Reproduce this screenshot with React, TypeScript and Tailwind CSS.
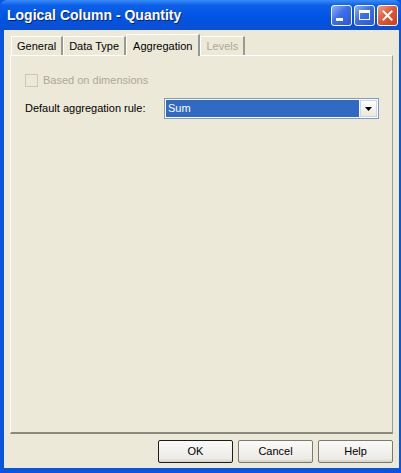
import { ReactNode } from 'react'

const font = { fontFamily: '"Liberation Sans", Arial, sans-serif' }

function TitleButton({ children, close }: { children: ReactNode; close?: boolean }) {
  return (
    <div
      className={`w-[21px] h-[21px] rounded-[3px] border border-white flex items-center justify-center ${
        close
          ? 'bg-[linear-gradient(135deg,#f0a088,#e05a36_45%,#c8401e)]'
          : 'bg-[linear-gradient(135deg,#8fb0f5,#3d6ee8_45%,#2a58d8)]'
      }`}
    >
      {children}
    </div>
  )
}

function Tab({ label, active, disabled }: { label: string; active?: boolean; disabled?: boolean }) {
  return (
    <div
      className={`relative flex items-center border-t border-l border-white ${
        active
          ? 'h-[22px] -mb-px bg-[#ece9d8] z-10 border-r-2 border-r-[#919b9c] px-[6px] pt-[2px]'
          : 'h-[19px] bg-[#ece9d8] border-r-2 border-r-[#9a9a90] px-[5px]'
      } ${disabled ? 'text-[#aca899]' : 'text-black'}`}
    >
      {label}
    </div>
  )
}

function Button({ label, def }: { label: string; def?: boolean }) {
  return (
    <div
      className={`w-[75px] h-[23px] flex items-center justify-center rounded-[2px] bg-[linear-gradient(#fafaf8,#ecebe6_85%,#d6d0c5)] ${
        def ? 'border border-[#1d1d1d]' : 'border border-[#7a7a6f]'
      }`}
    >
      {label}
    </div>
  )
}

export default function App() {
  return (
    <div className="w-[401px] h-[473px] bg-[#0a55e0] flex flex-col text-[11px]" style={font}>
      {/* title bar */}
      <div className="h-[30px] shrink-0 rounded-t-[7px] bg-[linear-gradient(#3a8cf8,#0b5fe8_18%,#0054e3_60%,#0a4fd4)] flex items-center pl-[7px] pr-[3px]">
        <div className="flex-1 text-white font-bold text-[14px] [text-shadow:1px_1px_#0a1f70]">
          Logical Column - Quantity
        </div>
        <div className="flex gap-[2px]">
          <TitleButton>
            <div className="w-[7px] h-[3px] bg-white mt-[9px] -ml-[4px]" />
          </TitleButton>
          <TitleButton>
            <div className="w-[11px] h-[10px] border border-white border-t-[3px]" />
          </TitleButton>
          <TitleButton close>
            <svg width="11" height="11" viewBox="0 0 11 11">
              <path d="M1.5 1.5 L9.5 9.5 M9.5 1.5 L1.5 9.5" stroke="white" strokeWidth="2" strokeLinecap="square" />
            </svg>
          </TitleButton>
        </div>
      </div>

      {/* body */}
      <div className="flex-1 ml-[4px] mr-[2px] mb-[5px] bg-[#ece9d8] flex flex-col">
        <div className="pl-[6px] pr-[6px] pt-[3px] flex flex-col">
          <div className="flex items-end h-[22px] pl-[1px]">
            <Tab label="General" />
            <Tab label="Data Type" />
            <Tab label="Aggregation" active />
            <Tab label="Levels" disabled />
          </div>
          <div className="h-[379px] bg-[#ece9d8] border-t border-l border-white border-r border-r-[#919b9c] border-b-2 border-b-[#8c8a7c] flex flex-col pl-[14px] pr-[13px] pt-[16px]">
            <div className="flex items-center gap-[5px] h-[16px]">
              <div className="w-[13px] h-[13px] border border-[#cac8bb] bg-[#ece9d8]" />
              <span className="text-[#aca899]">Based on dimensions</span>
            </div>
            <div className="flex items-center mt-[10px]">
              <span className="w-[139px]">Default aggregation rule:</span>
              <div className="flex-1 h-[21px] border border-[#7f9db9] bg-white p-[1px] flex">
                <div className="flex-1 bg-[#316ac5] text-white flex items-center pl-[2px]">Sum</div>
                <div className="w-[17px] bg-[linear-gradient(#fefefe,#ece9d8)] border border-[#c3d3fd] ml-[1px] flex items-center justify-center">
                  <svg width="7" height="4" viewBox="0 0 7 4">
                    <path d="M0 0 H7 L3.5 4 Z" fill="black" />
                  </svg>
                </div>
              </div>
            </div>
          </div>
        </div>
        <div className="flex justify-end gap-[5px] pr-[6px] pt-[6px]">
          <Button label="OK" def />
          <Button label="Cancel" />
          <Button label="Help" />
        </div>
      </div>
    </div>
  )
}
